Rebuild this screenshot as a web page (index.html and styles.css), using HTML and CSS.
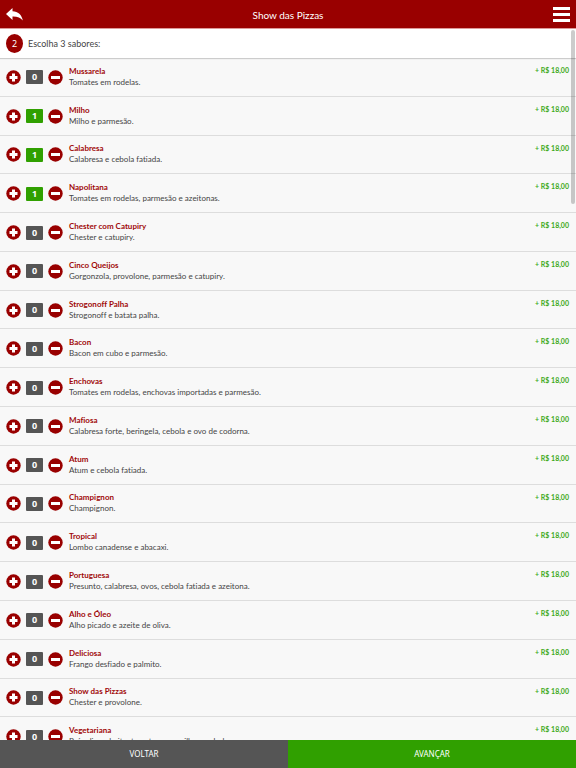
FILE: index.html
```html
<!DOCTYPE html>
<html lang="pt-BR">
<head>
<meta charset="utf-8">
<meta name="viewport" content="width=device-width, initial-scale=1">
<title>Show das Pizzas</title>
<link rel="stylesheet" href="styles.css">
</head>
<body>
<header class="topbar">
  <button class="icon-button" type="button" aria-label="Voltar">
    <svg class="icon-back" viewBox="0 0 17 13"><path d="M6.500 0V3.200C12 3.400 15.800 6.500 16.800 12.600C14.600 9.500 11.500 8.400 6.500 8.500V12L0 6Z"/></svg>
  </button>
  <h1 class="topbar-title">Show das Pizzas</h1>
  <button class="icon-button" type="button" aria-label="Menu">
    <svg class="icon-menu" viewBox="0 0 17 15"><path d="M0 0H17V3H0ZM0 6H17V9H0ZM0 12H17V15H0Z"/></svg>
  </button>
</header>
<section class="step">
  <span class="step-number">2</span>
  <h2 class="step-title">Escolha 3 sabores:</h2>
</section>
<main class="content">
  <ul class="flavors" id="flavors"></ul>
</main>
<div class="scroll-thumb"></div>
<footer class="actions">
  <button class="action action-back" type="button">VOLTAR</button>
  <button class="action action-next" type="button">AVANÇAR</button>
</footer>
<script src="script.js"></script>
</body>
</html>
```
FILE: styles.css
```css
* { box-sizing: border-box; }

body {
  margin: 0;
  height: 100vh;
  display: flex;
  flex-direction: column;
  position: relative;
  overflow: hidden;
  background: #f8f8f8;
  color: #444;
  font: 8px/12px Lato, "Noto Sans", sans-serif;
  font-variant-ligatures: none;
}

button {
  margin: 0;
  padding: 0;
  border: 0;
  background: none;
  color: inherit;
  font: inherit;
  cursor: pointer;
}

svg { display: block; }

.topbar {
  flex: none;
  height: 28px;
  padding: 0 6px;
  display: flex;
  align-items: center;
  justify-content: space-between;
  background: #900;
  color: #fff;
}

.topbar-title {
  margin: 0;
  padding-top: 2px;
  font-size: 10px;
  font-weight: 400;
}

.icon-back { width: 17px; height: 13px; fill: #fff; }
.icon-menu { width: 17px; height: 15px; fill: #fff; }

.step {
  flex: none;
  height: 30px;
  padding: 0 6px;
  display: flex;
  align-items: center;
  gap: 5px;
  position: relative;
  background: #fff;
  border-top: 1px solid #d99;
  box-shadow: 0 1px 1px #ccc;
}

.step-number {
  width: 17px;
  height: 19px;
  border-radius: 50%;
  background: #900;
  color: #fff;
  font-family: "Noto Sans", sans-serif;
  font-size: 9px;
  line-height: 19px;
  text-align: center;
}

.step-title {
  margin: 0;
  font-size: 9px;
  font-weight: 400;
}

.content {
  flex: 1;
  min-height: 0;
  overflow-y: auto;
  scrollbar-width: none;
}

.flavors {
  min-height: 698px;
  margin: 0;
  padding: 0;
  display: flex;
  flex-direction: column;
  list-style: none;
}

.flavor {
  flex: 1;
  padding: 0 7px 0 6px;
  display: flex;
  align-items: center;
  gap: 6px;
  border-bottom: 1px solid #ddd;
}

.counter {
  padding-top: 1px;
  display: flex;
  align-items: center;
  gap: 5px;
}

.icon-round { width: 15px; height: 15px; }
.icon-round circle { fill: #900; }
.icon-round path { fill: #fff; }

.count {
  width: 17px;
  height: 14px;
  border-radius: 1px;
  background: #555;
  color: #fff;
  font-family: "Noto Sans", sans-serif;
  font-size: 9px;
  font-weight: 700;
  line-height: 14px;
  text-align: center;
}

.count-chosen { background: #30a000; }

.info { flex: 1; }

.name {
  margin: 0;
  color: #a00808;
  font-size: 8px;
  font-weight: 700;
  line-height: 11px;
}

.description {
  margin: 0;
  line-height: 11px;
}

.price {
  align-self: flex-start;
  padding-top: 6px;
  color: #40aa18;
  font-size: 7px;
  font-weight: 700;
}

.scroll-thumb {
  position: absolute;
  top: 30px;
  right: 1px;
  width: 4px;
  height: 174px;
  border-radius: 2px;
  background: rgba(0, 0, 0, 0.2);
}

.actions {
  flex: none;
  height: 28px;
  display: flex;
}

.action {
  flex: 1;
  color: #fff;
  font-family: "Noto Sans", sans-serif;
  font-size: 8px;
}

.action-back { background: #555; }
.action-next { background: #30a000; }
```
FILE: script.js
```js
const flavors = [
  ["Mussarela", "Tomates em rodelas.", 0],
  ["Milho", "Milho e parmesão.", 1],
  ["Calabresa", "Calabresa e cebola fatiada.", 1],
  ["Napolitana", "Tomates em rodelas, parmesão e azeitonas.", 1],
  ["Chester com Catupiry", "Chester e catupiry.", 0],
  ["Cinco Queijos", "Gorgonzola, provolone, parmesão e catupiry.", 0],
  ["Strogonoff Palha", "Strogonoff e batata palha.", 0],
  ["Bacon", "Bacon em cubo e parmesão.", 0],
  ["Enchovas", "Tomates em rodelas, enchovas importadas e parmesão.", 0],
  ["Mafiosa", "Calabresa forte, beringela, cebola e ovo de codorna.", 0],
  ["Atum", "Atum e cebola fatiada.", 0],
  ["Champignon", "Champignon.", 0],
  ["Tropical", "Lombo canadense e abacaxi.", 0],
  ["Portuguesa", "Presunto, calabresa, ovos, cebola fatiada e azeitona.", 0],
  ["Alho e Óleo", "Alho picado e azeite de oliva.", 0],
  ["Deliciosa", "Frango desfiado e palmito.", 0],
  ["Show das Pizzas", "Chester e provolone.", 0],
  ["Vegetariana", "Brócolis, palmito, tomate seco, milho e cebola.", 0]
];

const plus = "M6 3.500H9V6H11.500V9H9V11.500H6V9H3.500V6H6Z";
const minus = "M3 6H12V9H3Z";
const round = (d) => `<svg class="icon-round" viewBox="0 0 15 15"><circle cx="7.500" cy="7.500" r="7.200"/><path d="${d}"/></svg>`;

document.getElementById("flavors").innerHTML = flavors.map(([name, description, count]) => `
  <li class="flavor">
    <div class="counter">
      <button type="button" aria-label="Adicionar ${name}">${round(plus)}</button>
      <output class="count${count ? " count-chosen" : ""}">${count}</output>
      <button type="button" aria-label="Remover ${name}">${round(minus)}</button>
    </div>
    <div class="info">
      <h3 class="name">${name}</h3>
      <p class="description">${description}</p>
    </div>
    <span class="price">+ R$ 18,00</span>
  </li>`).join("");
```
